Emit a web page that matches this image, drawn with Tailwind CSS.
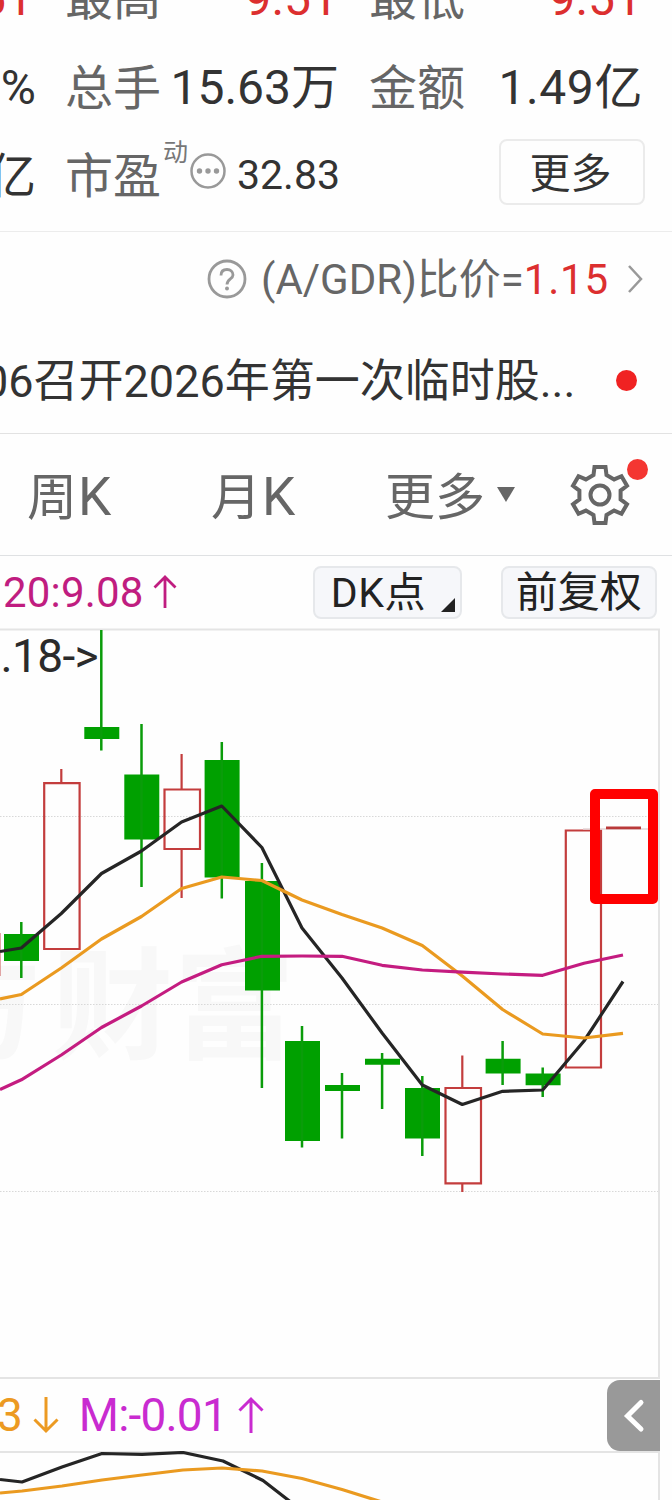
<!DOCTYPE html>
<html lang="zh-CN">
<head>
    <meta charset="UTF-8">
    <meta name="viewport" content="width=device-width, initial-scale=1.0">
    <title>行情 - 日K</title>
    <script src="https://cdn.jsdelivr.net/npm/@tailwindcss/browser@4"></script>
</head>
<body class="w-[672px] h-[1500px] overflow-hidden bg-[#fefefe] text-[#333] font-['Roboto','Noto_Sans_CJK_SC',sans-serif] leading-none whitespace-nowrap">

    <!-- Quote summary -->
    <section class="h-[232px] border-b border-[#ececec] overflow-hidden text-[48px]">
        <div class="flex items-center h-[88px] -mt-[45px]">
            <div class="w-[33px] flex justify-end shrink-0 text-[#dc2f2f]">9.51</div>
            <div class="w-[305px] pl-[32px] flex justify-between shrink-0"><span class="text-[#666]">最高</span><span class="text-[#dc2f2f]">9.51</span></div>
            <div class="w-[304px] pl-[31px] flex justify-between shrink-0"><span class="text-[#666]">最低</span><span class="text-[#dc2f2f]">9.51</span></div>
        </div>
        <div class="flex items-center h-[88px]">
            <div class="w-[36px] pt-[2px] flex justify-end shrink-0">1.61%</div>
            <div class="w-[303px] pl-[29px] flex justify-between shrink-0"><span class="text-[#666] pt-[3px]">总手</span><span class="pt-[2px]">15.63万</span></div>
            <div class="w-[304px] pl-[30px] flex justify-between shrink-0"><span class="text-[#666] pt-[3px]">金额</span><span class="pt-[2px] tracking-[0.6px]">1.49亿</span></div>
        </div>
        <div class="flex items-center h-[88px]">
            <div class="w-[36px] pt-[4px] flex justify-end shrink-0">158亿</div>
            <div class="w-[463px] pl-[29px] flex items-center shrink-0">
                <span class="text-[#666] pt-[4px]">市盈</span>
                <span class="text-[25px] text-[#777] self-start -mt-[9px] pl-[2px]">动</span>
                <svg class="w-[38px] h-[38px] -mt-[8px] ml-[1px] shrink-0" viewBox="0 0 38 38">
                    <circle cx="19" cy="19" r="16.5" fill="none" stroke="#999" stroke-width="2.5"/>
                    <g fill="#999"><circle cx="10.5" cy="19" r="2.7"/><circle cx="19" cy="19" r="2.7"/><circle cx="27.5" cy="19" r="2.7"/></g>
                </svg>
                <span class="text-[41px] pl-[10px]">32.83</span>
            </div>
            <button class="w-[146px] h-[66px] -mt-[6px] pt-[5px] pr-[3px] shrink-0 border-2 border-[#ebebeb] rounded-lg text-[41px]">更多</button>
        </div>
    </section>

    <!-- GDR ratio -->
    <section class="flex items-center h-[94px] pl-[207px] text-[42px] text-[#666]">
        <svg class="w-10 h-10 shrink-0" viewBox="0 0 40 40" fill="none" stroke="#999" stroke-width="2.8">
            <circle cx="20" cy="20" r="18"/>
            <path d="M14 16.500C14 12.500 16.500 10.500 20 10.500S26 12.500 26 16C26 20 20 20 20 25.500"/>
            <circle cx="20" cy="29.500" r="2" fill="#999" stroke="none"/>
        </svg>
        <span class="pl-[14px] pt-[2px]">(A/GDR)比价=</span>
        <span class="text-[#dc2f2f] tracking-[0.8px] pt-px">1.15</span>
        <svg class="w-4 h-8 ml-[18px] shrink-0" viewBox="0 0 16 32" fill="none" stroke="#999" stroke-width="2.5"><path d="M2 3l12 13L2 29"/></svg>
    </section>

    <!-- News -->
    <section class="flex items-center h-[108px] pt-[2px] border-b border-[#e2e2e2] text-[45px]">
        <span class="-ml-[17px] pt-px">06召开2026年第一次临时股...</span>
        <span class="size-[21px] rounded-full bg-[#f02222] ml-[41px] shrink-0"></span>
    </section>

    <!-- Period tabs -->
    <nav class="relative flex items-center h-[122px] pl-[27px] border-b border-[#dfe1e3] text-[50px] text-[#666]">
        <span class="w-[184px] pt-[6px] shrink-0">周<span class="text-[53px] leading-none pl-px">K</span></span>
        <span class="w-[174px] pt-[6px] shrink-0">月<span class="text-[53px] leading-none pl-px">K</span></span>
        <span class="pt-[6px]">更多</span>
        <svg class="w-[20px] h-[15px] ml-[11px] shrink-0" viewBox="0 0 20 15"><path d="M1 0h18L10 15z" fill="#666"/></svg>
        <svg class="w-[64px] h-[64px] ml-[52px] shrink-0" viewBox="-32 -32 64 64" fill="none" stroke="#666" stroke-width="4">
            <path d="M-6.500-20L-5.500-28L5.500-28L6.500-20L14.100-15.600L21.500-18.800L27-9.200L20.600-4.400L20.600 4.400L27 9.200L21.500 18.800L14.100 15.600L6.500 20L5.500 28L-5.500 28L-6.500 20L-14.100 15.600L-21.500 18.800L-27 9.200L-20.600 4.400L-20.600-4.400L-27-9.200L-21.500-18.800L-14.100-15.600Z"/>
            <circle r="9.500"/>
        </svg>
        <span class="absolute left-[627px] top-[25px] size-[21px] rounded-full bg-[#f43632]"></span>
    </nav>

    <!-- MA legend and chart options -->
    <section class="flex items-center h-[72px] pl-[3px] text-[42px]">
        <span class="text-[#c01d80] pt-[2px] tracking-[0.2px]">20:9.08</span>
        <svg class="w-[24px] h-[36px] ml-[9px] shrink-0" viewBox="0 0 24 36" fill="none" stroke="#c01d80" stroke-width="2.800"><path d="M12 34V3M1.500 13.500L12 3L22.500 13.500"/></svg>
        <button class="relative w-[149px] h-[53px] ml-[136px] pl-[16px] pt-[2px] text-left shrink-0 rounded-lg border-2 border-[#e6e8eb] bg-[#f6f7fa] text-[#222] text-[41px] tracking-[0.6px]">DK点
            <svg class="absolute right-[5px] bottom-[5px] w-[14px] h-[14px]" viewBox="0 0 14 14"><path d="M14 0v14H0z" fill="#222"/></svg>
        </button>
        <button class="w-[156px] h-[53px] ml-[39px] pt-[2px] shrink-0 rounded-lg border-2 border-[#e6e8eb] bg-[#f6f7fa] text-[#222] text-[42px]">前复权</button>
    </section>

    <!-- Candles -->
    <svg class="block w-[672px] h-[751px]" viewBox="0 628 672 751">
        <text x="-80 52 174" y="1049" font-size="121" font-weight="700" fill="#f8f8f8" font-family="Noto Sans CJK SC">方财富</text>
        <path d="M0 629.500H659V1378H0" fill="none" stroke="#e4e4e4" stroke-width="2"/>
        <path d="M0 816.500H658M0 1004.500H658M0 1191.500H658" stroke="#d8d8d8" stroke-width="1" stroke-dasharray="1.500 1.500"/>
        <text x="0.500" y="671.500" font-size="46" textLength="98" fill="#2b2b2b">.18-&gt;</text>

        <!-- falling days -->
        <g fill="#00a000">
            <path d="M4 934h35v27H4zM84.300 727h35v12h-35zM124.300 774.500h35v65h-35zM204.600 760h35v117.500h-35zM245 881h35v109.500h-35zM285 1041h35v100h-35zM325 1085h35v6h-35zM365 1058.700h35v6h-35zM405 1088h35v50.500h-35zM485.600 1058.700h35v14.800h-35zM525.600 1073.500h35v11.700h-35z"/>
        </g>
        <path d="M21.300 922V978M101.300 630V750.500M141.500 724V887M221.800 742V898.500M261.900 863V1088M302 1026V1147.500M342 1073V1138.500M382.100 1053V1109M422.300 1076V1156M502.600 1041V1085M542.700 1067.500V1097" stroke="#0a9c0a" stroke-width="2.500"/>

        <!-- rising days -->
        <g fill="none" stroke="#c33d3d" stroke-width="2.200">
            <path d="M0 933V976" stroke-width="1.500" opacity="0.6"/>
            <path d="M44.200 783.200H79.600V949H44.200zM164.500 789.500H200V849H164.500zM445.500 1088H481V1183.300H445.500zM565.800 830.500H601V1067.500H565.800z"/>
            <path d="M61.300 769V783M181.600 754V789M181.600 849V898M462.300 1055.500V1088M462.300 1183V1192"/>
        </g>
        <path d="M583 829H656" stroke="#e3d3d5" stroke-width="1.500"/>
        <path d="M606 827.800H641" stroke="#b93a3a" stroke-width="2.800"/>

        <!-- moving averages -->
        <g fill="none" stroke-width="3.200" stroke-linejoin="round">
            <path stroke="#252525" d="M0 951.500L21.300 948L61.300 913.500L101.500 873.500L141.500 851L181.600 822L221.800 806L261.900 847.500L302 928L342 978L382.100 1033L422.300 1085L462.300 1104.500L502.600 1091.300L542.700 1090L584 1041L623 981.500"/>
            <path stroke="#ea9a20" d="M0 999L21.300 994.500L61.300 968L101.500 939L141.500 916.500L181.600 888.500L221.800 877L261.900 880.500L302 900L342 914.500L382.100 928L422.300 945.500L462.300 976L502.600 1009.500L542.700 1034L584 1038L623 1033.300"/>
            <path stroke="#c41c80" d="M0 1089.500L21.300 1079.800L61.300 1055L101.500 1027.500L141.500 1006L181.600 982L221.800 964.800L261.900 956.300L302 956L342 956.300L382.100 965.300L422.300 970L462.300 972.200L502.600 974L542.700 975.300L584 963.200L623 955"/>
        </g>

        <!-- highlighted last day -->
        <rect x="595" y="794" width="58" height="105" fill="none" stroke="#ff0000" stroke-width="10" stroke-linejoin="round"/>
    </svg>

    <!-- MACD legend -->
    <section class="flex items-center h-[72px] text-[46px]">
        <span class="-ml-[3px] text-[#ec9a22]">3</span>
        <svg class="w-[26px] h-[38px] ml-[10px] shrink-0" viewBox="0 0 26 38" fill="none" stroke="#ec9a22" stroke-width="3"><path d="M13 1V35M1.500 23.500L13 35L24.500 23.500"/></svg>
        <span class="w-[179px] pl-[20px] text-[#c92bd0] tracking-[-0.8px] shrink-0">M:-0.01</span>
        <svg class="w-[26px] h-[38px] shrink-0" viewBox="0 0 26 38" fill="none" stroke="#c92bd0" stroke-width="3"><path d="M13 37V3M1.500 14.500L13 3L24.500 14.500"/></svg>
        <button class="ml-auto mr-[12px] w-[53px] h-[71px] bg-[#999] rounded-l-[13px] shrink-0">
            <svg class="w-[53px] h-[71px]" viewBox="0 0 53 71" fill="none" stroke="#fff" stroke-width="5" stroke-linecap="round"><path d="M34 22.500L20.500 36L34 49"/></svg>
        </button>
    </section>

    <!-- MACD -->
    <svg class="block w-[672px] h-[49px]" viewBox="0 1451 672 49">
        <path d="M0 1452H659V1502" fill="none" stroke="#e4e4e4" stroke-width="2"/>
        <g fill="none" stroke-width="3.200" stroke-linejoin="round">
            <path stroke="#252525" d="M0 1479.500L22 1482L62 1467L102 1453.500L142 1454.300L183 1452.500L223 1461L263 1480.500L292 1503"/>
            <path stroke="#ea9a20" d="M0 1493L22 1491L62 1486L102 1480L142 1475L183 1470L222 1468L262 1471L302 1478.500L342 1489.500L382 1502"/>
        </g>
    </svg>
</body>
</html>
